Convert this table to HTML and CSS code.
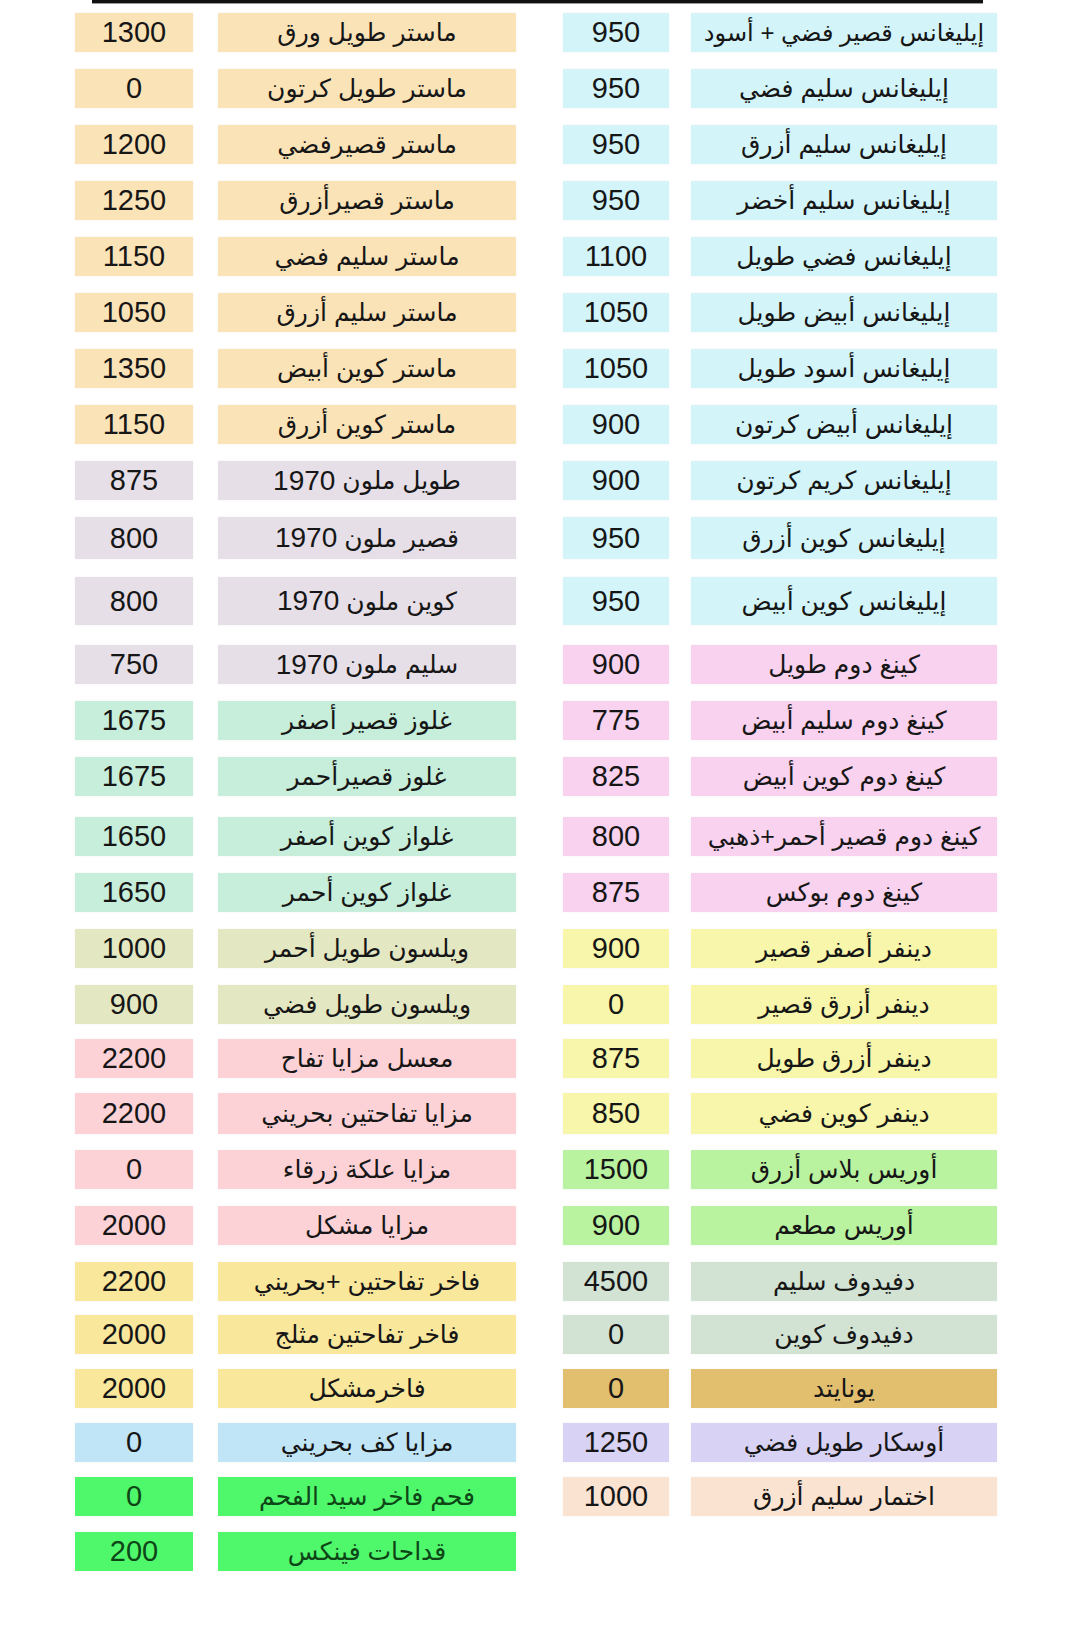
FILE: index.html
```html
<!DOCTYPE html>
<html lang="ar">
<head>
<meta charset="utf-8">
<title>قائمة الأسعار</title>
<link rel="stylesheet" href="styles.css">
</head>
<body>
<div class="page">
  <div class="topline"></div>
  <div class="list" dir="rtl">
    <div class="row first"><div class="name r elegance wide">إيليغانس قصير فضي + أسود</div><div class="price r elegance">950</div><div class="name l master">ماستر طويل ورق</div><div class="price l master">1300</div></div>
    <div class="row"><div class="name r elegance">إيليغانس سليم فضي</div><div class="price r elegance">950</div><div class="name l master">ماستر طويل كرتون</div><div class="price l master">0</div></div>
    <div class="row"><div class="name r elegance">إيليغانس سليم أزرق</div><div class="price r elegance">950</div><div class="name l master">ماستر قصيرفضي</div><div class="price l master">1200</div></div>
    <div class="row"><div class="name r elegance">إيليغانس سليم أخضر</div><div class="price r elegance">950</div><div class="name l master">ماستر قصيرأزرق</div><div class="price l master">1250</div></div>
    <div class="row"><div class="name r elegance">إيليغانس فضي طويل</div><div class="price r elegance">1100</div><div class="name l master">ماستر سليم فضي</div><div class="price l master">1150</div></div>
    <div class="row"><div class="name r elegance">إيليغانس أبيض طويل</div><div class="price r elegance">1050</div><div class="name l master">ماستر سليم أزرق</div><div class="price l master">1050</div></div>
    <div class="row"><div class="name r elegance">إيليغانس أسود طويل</div><div class="price r elegance">1050</div><div class="name l master">ماستر كوين أبيض</div><div class="price l master">1350</div></div>
    <div class="row"><div class="name r elegance">إيليغانس أبيض كرتون</div><div class="price r elegance">900</div><div class="name l master">ماستر كوين أزرق</div><div class="price l master">1150</div></div>
    <div class="row"><div class="name r elegance">إيليغانس كريم كرتون</div><div class="price r elegance">900</div><div class="name l c1970">طويل ملون <span class="num">1970</span></div><div class="price l c1970">875</div></div>
    <div class="row h42"><div class="name r elegance">إيليغانس كوين أزرق</div><div class="price r elegance">950</div><div class="name l c1970">قصير ملون <span class="num">1970</span></div><div class="price l c1970">800</div></div>
    <div class="row h48 g18"><div class="name r elegance">إيليغانس كوين أبيض</div><div class="price r elegance">950</div><div class="name l c1970">كوين ملون <span class="num">1970</span></div><div class="price l c1970">800</div></div>
    <div class="row g20"><div class="name r kingdom">كينغ دوم طويل</div><div class="price r kingdom">900</div><div class="name l c1970">سليم ملون <span class="num">1970</span></div><div class="price l c1970">750</div></div>
    <div class="row"><div class="name r kingdom">كينغ دوم سليم أبيض</div><div class="price r kingdom">775</div><div class="name l gauloises">غلوز قصير أصفر</div><div class="price l gauloises">1675</div></div>
    <div class="row"><div class="name r kingdom">كينغ دوم كوين أبيض</div><div class="price r kingdom">825</div><div class="name l gauloises">غلوز قصيرأحمر</div><div class="price l gauloises">1675</div></div>
    <div class="row g21"><div class="name r kingdom">كينغ دوم قصير أحمر+ذهبي</div><div class="price r kingdom">800</div><div class="name l gauloises">غلواز كوين أصفر</div><div class="price l gauloises">1650</div></div>
    <div class="row"><div class="name r kingdom">كينغ دوم بوكس</div><div class="price r kingdom">875</div><div class="name l gauloises">غلواز كوين أحمر</div><div class="price l gauloises">1650</div></div>
    <div class="row"><div class="name r denver">دينفر أصفر قصير</div><div class="price r denver">900</div><div class="name l wilson">ويلسون طويل أحمر</div><div class="price l wilson">1000</div></div>
    <div class="row"><div class="name r denver">دينفر أزرق قصير</div><div class="price r denver">0</div><div class="name l wilson">ويلسون طويل فضي</div><div class="price l wilson">900</div></div>
    <div class="row g15"><div class="name r denver">دينفر أزرق طويل</div><div class="price r denver">875</div><div class="name l mazaya">معسل مزايا تفاح</div><div class="price l mazaya">2200</div></div>
    <div class="row g15 h41"><div class="name r denver">دينفر كوين فضي</div><div class="price r denver">850</div><div class="name l mazaya">مزايا تفاحتين بحريني</div><div class="price l mazaya">2200</div></div>
    <div class="row g16"><div class="name r oris">أوريس بلاس أزرق</div><div class="price r oris">1500</div><div class="name l mazaya">مزايا علكة زرقاء</div><div class="price l mazaya">0</div></div>
    <div class="row"><div class="name r oris">أوريس مطعم</div><div class="price r oris">900</div><div class="name l mazaya">مزايا مشكل</div><div class="price l mazaya">2000</div></div>
    <div class="row"><div class="name r davidoff">دفيدوف سليم</div><div class="price r davidoff">4500</div><div class="name l fakher">فاخر تفاحتين +بحريني</div><div class="price l fakher">2200</div></div>
    <div class="row g14"><div class="name r davidoff">دفيدوف كوين</div><div class="price r davidoff">0</div><div class="name l fakher">فاخر تفاحتين مثلج</div><div class="price l fakher">2000</div></div>
    <div class="row g15"><div class="name r united">يونايتد</div><div class="price r united">0</div><div class="name l fakher">فاخرمشكل</div><div class="price l fakher">2000</div></div>
    <div class="row g15"><div class="name r oscar">أوسكار طويل فضي</div><div class="price r oscar">1250</div><div class="name l kaf">مزايا كف بحريني</div><div class="price l kaf">0</div></div>
    <div class="row g15"><div class="name r ekhtimar">اختمار سليم أزرق</div><div class="price r ekhtimar">1000</div><div class="name l coal">فحم فاخر سيد الفحم</div><div class="price l coal">0</div></div>
    <div class="row g16"><div class="name r empty"></div><div class="price r empty"></div><div class="name l coal">قداحات فينكس</div><div class="price l coal">200</div></div>
  </div>
</div>
</body>
</html>
```

FILE: styles.css
```css
html, body {
  margin: 0;
  padding: 0;
  background: #ffffff;
}

body {
  font-family: "Liberation Sans", "DejaVu Sans", Arial, sans-serif;
  color: #161616;
}

.page {
  width: 1080px;
  min-height: 1639px;
}

.topline {
  margin-left: 92px;
  width: 891px;
  height: 3px;
  background: #111111;
  border-bottom: 1px solid #9a9a9a;
}

.list {
  margin-left: 75px;
  width: 922px;
  padding-top: 9px;
  display: flex;
  flex-direction: column;
}

.row {
  display: flex;
  height: 39px;
  margin-top: 17px;
}

.row.first { margin-top: 0; }
.row.h41 { height: 41px; }
.row.h42 { height: 42px; }
.row.h48 { height: 48px; }
.row.g14 { margin-top: 14px; }
.row.g15 { margin-top: 15px; }
.row.g16 { margin-top: 16px; }
.row.g18 { margin-top: 18px; }
.row.g20 { margin-top: 20px; }
.row.g21 { margin-top: 21px; }

.name, .price {
  display: flex;
  align-items: center;
  justify-content: center;
  white-space: nowrap;
  box-shadow: 0 0 2px rgba(0, 0, 0, 0.06);
}

.name {
  font-size: 25px;
  gap: 7px;
}

.name .num {
  font-size: 28px;
}

.price {
  direction: ltr;
  font-size: 29px;
}

.name.r { width: 306px; }
.price.r { width: 106px; margin-right: 22px; }
.name.l { width: 298px; margin-right: 47px; }
.price.l { width: 118px; margin-right: 25px; }

.name.wide { font-size: 24px; }

.master { background: #fbe3b8; }
.elegance { background: #d3f5f9; }
.c1970 { background: #e6dfe7; }
.kingdom { background: #f8d2ef; }
.gauloises { background: #c6eedb; }
.wilson { background: #e4e8c2; }
.denver { background: #f7f6aa; }
.mazaya { background: #fcd2d7; }
.oris { background: #baf3a0; }
.davidoff { background: #d2e3d4; }
.united { background: #e2bf6f; }
.fakher { background: #f9e79c; }
.kaf { background: #c0e5f7; }
.oscar { background: #d8d2f4; }
.ekhtimar { background: #fbe3d2; }
.coal { background: #4ff76b; color: #0d4517; }
.empty { background: transparent; box-shadow: none; }
```
